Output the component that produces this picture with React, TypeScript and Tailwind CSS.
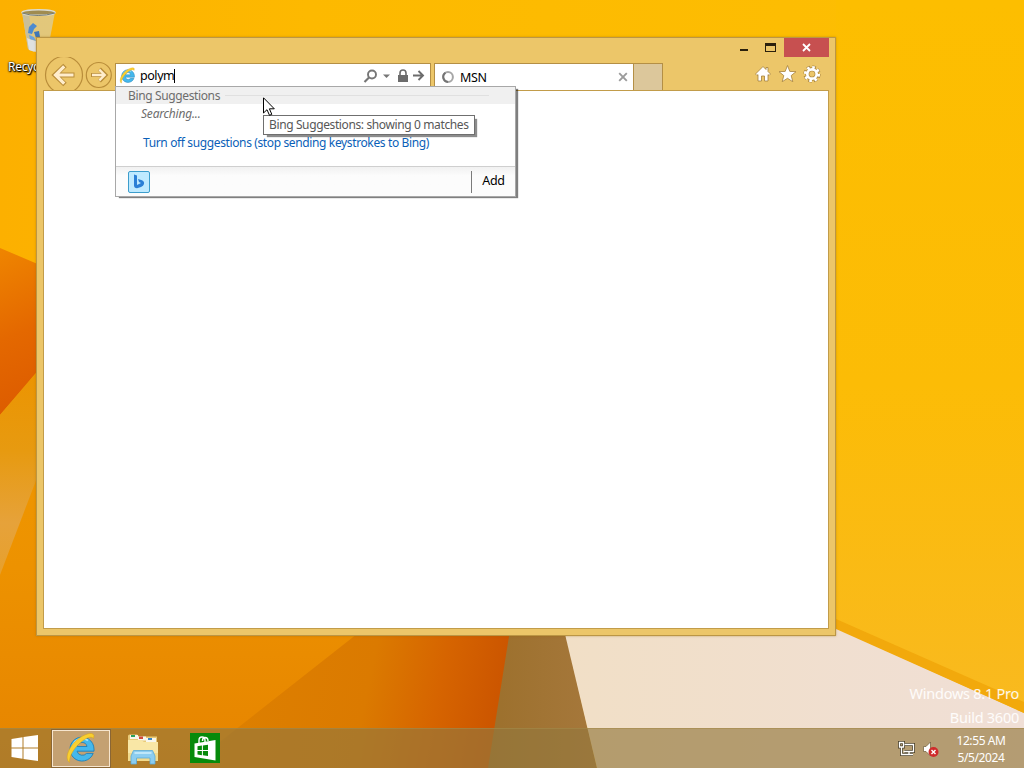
import React from 'react';

function Wallpaper() {
  return (
    <svg className="absolute inset-0" width="1024" height="768" viewBox="0 0 1024 768">
      <defs>
        <linearGradient id="sky" x1="0" y1="0" x2="1" y2="0">
          <stop offset="0" stopColor="#fcb000" />
          <stop offset="0.3" stopColor="#fdb900" />
          <stop offset="1" stopColor="#fdbf03" />
        </linearGradient>
        <linearGradient id="right" x1="0" y1="0" x2="0" y2="1">
          <stop offset="0" stopColor="#fdbe00" />
          <stop offset="0.5" stopColor="#fcbc06" />
          <stop offset="1" stopColor="#f8b924" />
        </linearGradient>
        <linearGradient id="ember" x1="0" y1="0" x2="0.1" y2="1">
          <stop offset="0" stopColor="#ef8500" />
          <stop offset="0.55" stopColor="#e46800" />
          <stop offset="1" stopColor="#dd5c00" />
        </linearGradient>
        <linearGradient id="band" x1="0" y1="0" x2="0" y2="1">
          <stop offset="0" stopColor="#ec9400" />
          <stop offset="0.4" stopColor="#e79a10" />
          <stop offset="0.75" stopColor="#e6a23a" />
          <stop offset="1" stopColor="#e7a02c" />
        </linearGradient>
        <linearGradient id="floor" x1="0" y1="0" x2="0" y2="1">
          <stop offset="0" stopColor="#f09900" />
          <stop offset="0.5" stopColor="#ed9200" />
          <stop offset="1" stopColor="#e68400" />
        </linearGradient>
        <linearGradient id="fold" x1="0" y1="0" x2="1" y2="0.1">
          <stop offset="0" stopColor="#de8200" />
          <stop offset="0.6" stopColor="#db7a00" />
          <stop offset="0.82" stopColor="#d66400" />
          <stop offset="1" stopColor="#cc5600" />
        </linearGradient>
        <linearGradient id="shade" x1="0" y1="0" x2="1" y2="0">
          <stop offset="0" stopColor="#9c702c" />
          <stop offset="1" stopColor="#a6783c" />
        </linearGradient>
        <linearGradient id="cream" x1="0" y1="0" x2="1" y2="0">
          <stop offset="0" stopColor="#f1dfc6" />
          <stop offset="1" stopColor="#f0dfd6" />
        </linearGradient>
      </defs>
      <rect width="1024" height="768" fill="url(#sky)" />
      <rect x="836" width="188" height="768" fill="url(#right)" />
      <path d="M0 415 L40 368 L520 600 V768 H0 Z" fill="url(#floor)" />
      <path d="M0 248 L40 265 V369 L0 415 Z" fill="url(#ember)" />
      <path d="M0 415 L40 368 V470 L0 575 Z" fill="url(#band)" />
      <path d="M390 608 L235 730 L187 768 H500 L512 608 Z" fill="url(#fold)" />
      <path d="M510 630 L565 630 L597 768 H488 Z" fill="url(#shade)" />
      <path d="M564 630 L836 628 L1024 713 V768 H597 Z" fill="url(#cream)" />
      <path d="M836 619 L1024 702 V713 L836 629 Z" fill="#f2a90c" />
    </svg>
  );
}

function IeLogo({ size }: { size: number }) {
  return (
    <svg width={size} height={size} viewBox="0 0 32 32" fill="none">
      <path
        d="M29 19.2 H12 A5.6 5.6 0 0 0 21.6 21.4 H28.200 A12 12 0 1 1 29 17 Z M12.200 14.500 H22 A5 5 0 0 0 12.200 14.500 Z"
        fill="#45b8ec"
        fillRule="evenodd"
        stroke="#1f80b8"
        strokeWidth="0.9"
      />
      <path d="M8 13 A10 10 0 0 1 23 8.500" stroke="#a4e4fb" strokeWidth="1.6" />
      <path
        d="M4.500 30.500 C-1.500 26 5 13.500 12.500 7.500 C19 2.200 27.500 -0.800 29 3.500 L28.500 6.500 C26 3.500 20.500 6 15 11 C8.500 17 4.500 23.500 4.500 30.500 Z"
        fill="#f9cf30"
        stroke="#d9a114"
        strokeWidth="0.5"
      />
    </svg>
  );
}

function RecycleBin() {
  return (
    <svg className="absolute left-[20px] top-[8px]" width="38" height="46" viewBox="0 0 38 46">
      <path d="M2 4 L8 41 Q18 46 28 41 L35 4 Z" fill="#dfca88" fillOpacity="0.9" />
      <path d="M2 4 L8 41 Q11 43 14 43.5 L9 6 Z" fill="#c9bf9a" />
      <path d="M7 30 L9 42 Q18 46 27 42 L29 30 Q18 36 7 30 Z" fill="#dfe1e0" />
      <ellipse cx="18.500" cy="4.500" rx="16.500" ry="2.800" fill="#a08c50" stroke="#dcdcd0" strokeWidth="1.500" />
      <path d="M2 5 Q18 10 35 5" stroke="#6a7068" strokeWidth="0.9" fill="none" />
      <path d="M9 19 L13 15 L17 18 L14 21 L12 26 L8 25 Z" fill="#4d8bd0" />
      <path d="M9 27 L14 29 L16 33 L10 31 Z" fill="#6ba3de" />
      <path d="M14 24 L19 23 L20 29 L16 30 Z" fill="#3f77b8" />
    </svg>
  );
}

function NavButtons() {
  return (
    <svg className="shrink-0" width="70" height="36" viewBox="0 0 70 36" fill="none">
      <g stroke="#b98d3a" strokeWidth="1.200">
        <circle cx="21" cy="20" r="18.500" />
        <circle cx="55.800" cy="20" r="12.500" />
      </g>
      <g>
        <path d="M31.500 20 H13 M22 10.500 L12 20 L22 29.500" stroke="#b98d3a" strokeWidth="5" />
        <path d="M30.500 20 H13 M21.200 11.300 L12.500 20 L21.200 28.700" stroke="#ffedcc" strokeWidth="3.200" />
        <path d="M48 20 H62 M56.500 14 L62.500 20 L56.500 26" stroke="#b98d3a" strokeWidth="4" />
        <path d="M49 20 H61 M56.300 14.600 L61.700 20 L56.300 25.400" stroke="#ffedcc" strokeWidth="2.400" />
      </g>
    </svg>
  );
}

function AddressBar() {
  return (
    <div className="w-[316px] h-[27px] bg-white border border-[#b48f45] flex items-center shrink-0 pl-[3px] pb-[2px]">
      <IeLogo size={17} />
      <span className="ml-[4px] pt-[2px] text-[12.5px] text-black leading-none tracking-[-0.45px]">polym</span>
      <span className="w-px h-[14px] bg-black" />
      <svg className="ml-auto mr-[4px]" width="64" height="16" viewBox="0 0 64 16" fill="none">
        <circle cx="10" cy="6.500" r="4" stroke="#767676" strokeWidth="1.900" />
        <path d="M7 9.500 L2.500 14" stroke="#767676" strokeWidth="2.200" />
        <path d="M21 6.500 H28 L24.500 10 Z" fill="#767676" />
        <rect x="36" y="7" width="10" height="7" fill="#6c6c6c" />
        <path d="M38 7.500 V5 A3 3 0 0 1 44 5 V7.500" stroke="#6c6c6c" strokeWidth="1.600" />
        <path d="M51 7.500 H60.500 M56.500 3 L61 7.500 L56.500 12" stroke="#6c6c6c" strokeWidth="1.900" />
      </svg>
    </div>
  );
}

function Tab() {
  return (
    <div className="ml-[3px] w-[200px] h-[27px] bg-white border border-b-0 border-[#b48f45] flex items-center pl-[6px] pr-[5px] shrink-0">
      <svg width="14" height="14" viewBox="0 0 14 14" fill="none">
        <circle cx="7" cy="7" r="4.900" stroke="#a6a6a6" strokeWidth="2" />
        <path d="M4.500 2.900 A4.900 4.900 0 0 0 7 11.900" stroke="#747474" strokeWidth="2" />
      </svg>
      <span className="ml-[5px] pt-[2px] text-[12.5px] text-black leading-none tracking-[-0.4px]">MSN</span>
      <svg className="ml-auto" width="10" height="10" viewBox="0 0 10 10">
        <path d="M1.200 1.200 L8.800 8.800 M8.800 1.200 L1.200 8.800" stroke="#9b9b9b" strokeWidth="1.900" />
      </svg>
    </div>
  );
}

function CommandIcons() {
  return (
    <svg className="ml-auto mr-[5px] -mt-[5px]" width="70" height="20" viewBox="0 0 70 20" fill="#ffffff" stroke="#a5803c" strokeWidth="0.8">
      <path d="M9 2.500 L1.500 10 L3 11.500 L4 10.600 V17 H7.500 V12 H10.500 V17 H14 V10.600 L15 11.500 L16.500 10 L14 7.500 V3.500 H12 V5.500 Z" />
      <path d="M33.500 1.500 L35.800 7.400 L42 7.700 L37.200 11.600 L38.800 17.700 L33.500 14.300 L28.200 17.700 L29.800 11.600 L25 7.700 L31.200 7.400 Z" />
      <g fill="none">
        <circle cx="58" cy="10" r="6.600" stroke="#a5803c" strokeWidth="4" strokeDasharray="3.300 1.884" />
        <circle cx="58" cy="10" r="4.700" stroke="#a5803c" strokeWidth="4" />
        <circle cx="58" cy="10" r="6.600" stroke="#ffffff" strokeWidth="3" strokeDasharray="2.600 2.584" />
        <circle cx="58" cy="10" r="4.700" stroke="#ffffff" strokeWidth="2.700" />
      </g>
    </svg>
  );
}

function SuggestionPopup() {
  return (
    <div className="absolute left-[78px] top-[48px] w-[401px] h-[111px] bg-white border border-[#a8a8a8] shadow-[3px_2px_1px_-1px_rgba(0,0,0,0.5)] flex flex-col text-[12px] tracking-[-0.37px]">
      <div className="h-[17px] bg-[#f0f0f0] flex items-center pl-[12px] pr-[26px] text-[#6d6d6d] shrink-0">
        <span className="leading-none whitespace-nowrap">Bing Suggestions</span>
        <span className="ml-[5px] flex-1 h-px bg-[#e0e0e0]" />
      </div>
      <div className="mt-[2px] pl-[25px] leading-[16px] italic text-[#6d6d6d] tracking-[-0.2px]">Searching...</div>
      <div className="mt-[13px] pl-[27px] leading-[16px] text-[#0b5fb8] whitespace-nowrap">
        Turn off suggestions (stop sending keystrokes to Bing)
      </div>
      <div className="mt-auto h-[30px] bg-gradient-to-b from-[#f1f1f1] to-[#fcfcfc] to-30% border-t border-[#cfcfcf] flex items-center pl-[12px]">
        <div className="w-[22px] h-[22px] bg-[#bfeaff] border border-[#3c9dcc] rounded-[2px] flex items-center justify-center">
          <svg width="12" height="15" viewBox="0 0 12 15">
            <path d="M1 0.500 L4 1.500 V11 L8 9 L6 8 L5 5 L9 6.300 Q11.500 7.400 11 10 Q10.500 12 8 13 L4 14.200 Q1 14 1 11.500 Z" fill="#2b7fd6" />
          </svg>
        </div>
        <div className="ml-auto w-[44px] h-[22px] border-l border-[#7b7b7b] flex items-center justify-center text-[12.5px] text-black">Add</div>
      </div>
    </div>
  );
}

function BrowserWindow() {
  return (
    <div className="absolute left-[36px] top-[37px] w-[800px] h-[599px] bg-[#ecc669] border border-[#bb9645] flex flex-col px-[6px] pb-[6px] shadow-[0_0_2px_rgba(150,100,0,0.5)]">
      <div className="h-[19px] flex justify-end shrink-0">
        <div className="w-[27px] flex items-center justify-center">
          <span className="w-[8px] h-[2px] bg-[#2b200c] mt-[5px]" />
        </div>
        <div className="w-[27px] flex items-center justify-center">
          <span className="w-[11px] h-[9px] border border-t-[3px] border-[#2b200c]" />
        </div>
        <div className="w-[45px] bg-[#c75050] flex items-center justify-center">
          <svg width="9" height="9" viewBox="0 0 9 9">
            <path d="M1 1 L8 8 M8 1 L1 8" stroke="#ffffff" strokeWidth="1.800" />
          </svg>
        </div>
      </div>
      <div className="h-[33px] flex items-end shrink-0 overflow-hidden">
        <div className="h-[35px] w-[72px] shrink-0">
          <NavButtons />
        </div>
        <AddressBar />
        <Tab />
        <div className="w-[29px] h-[27px] bg-[#dcc79b] border border-l-0 border-b-0 border-[#b48f45] shrink-0" />
        <div className="flex-1 h-[27px] flex items-center">
          <CommandIcons />
        </div>
      </div>
      <div className="flex-1 bg-white border border-[#c29c4a]" />
      <SuggestionPopup />
    </div>
  );
}

function Tooltip() {
  return (
    <div className="absolute left-[263px] top-[115px] w-[212px] h-[20px] bg-white border border-[#6f6f6f] shadow-[3px_3px_1px_-1px_rgba(0,0,0,0.45)] flex items-center pl-[5px] text-[12px] text-[#575757] tracking-[-0.38px] whitespace-nowrap">
      Bing Suggestions: showing 0 matches
    </div>
  );
}

function Cursor() {
  return (
    <svg className="absolute left-[263px] top-[97px]" width="13" height="20" viewBox="0 0 13 20">
      <path d="M0.500 0.800 V16 L4 12.700 L6.500 18.300 L8.800 17.300 L6.400 11.800 H11.300 Z" fill="#ffffff" stroke="#000000" />
    </svg>
  );
}

function StartIcon() {
  return (
    <svg width="28" height="26" viewBox="0 0 28 26" fill="#ffffff">
      <path d="M0.500 4 L11.500 2.300 V12.500 H0.500 Z M12.500 2.100 L27 0 V12.500 H12.500 Z M0.500 13.500 H11.500 V23.700 L0.500 22 Z M12.500 13.500 H27 V26 L12.500 23.900 Z" />
    </svg>
  );
}

function ExplorerIcon() {
  return (
    <svg width="34" height="32" viewBox="0 0 34 32">
      <path d="M2 3 Q2 1.500 3.500 1.500 H11 L13 3.500 H31 V28 H2 Z" fill="#e9cb78" />
      <rect x="4" y="2" width="8" height="4" fill="#f8f6ec" />
      <rect x="5" y="2" width="4" height="2" fill="#2aa05a" />
      <rect x="12" y="3.500" width="8" height="4" fill="#f8f6ec" />
      <rect x="13" y="3.500" width="4" height="2.500" fill="#d2493c" />
      <rect x="20" y="5" width="10" height="4" fill="#f8f6ec" />
      <rect x="22" y="5" width="4" height="2" fill="#3c86c2" />
      <path d="M2 7 H15 L18 9 H32 V28 H2 Z" fill="#f9e7a6" />
      <path d="M2 20 H32 V28 H2 Z" fill="#f2da8c" />
      <path d="M5 31 V23 L7.500 17.500 H26.500 L29 23 V31 H24 V25 H10.500 V31 Z" fill="#8ccdf0" stroke="#5aa9d6" strokeWidth="0.8" />
      <path d="M8.500 20 H25.500" stroke="#d0effc" strokeWidth="1.500" />
    </svg>
  );
}

function StoreIcon() {
  return (
    <svg width="30" height="30" viewBox="0 0 30 30">
      <rect width="30" height="30" fill="#078a0b" />
      <path d="M4.500 10.500 L25.500 7 V27.500 L4.500 24 Z" fill="#ffffff" />
      <path d="M9 11 V7.500 Q9 4 12 4 Q15 4 15 7.500 V9 M12.500 8 Q12.500 4.500 15 4.500 Q18 4.500 18 8" fill="none" stroke="#ffffff" strokeWidth="1.400" />
      <path d="M7.500 13.300 L11.900 12.600 V17 H7.500 Z M12.900 12.500 L18 11.700 V17 H12.900 Z M7.500 18 H11.900 V22.200 L7.500 21.500 Z M12.900 18 H18 V23.100 L12.900 22.300 Z" fill="#078a0b" />
    </svg>
  );
}

function TrayIcons() {
  return (
    <svg width="42" height="18" viewBox="0 0 42 18" fill="none">
      <g stroke="#4d432c" strokeWidth="3">
        <path d="M6.500 4.500 H15.500 V11.500 H6.500 M11 12 V14.500 M7 14.500 H15" />
        <path d="M1.500 2.500 H5.500 V7 H1.500 Z M3.500 7 V14.500 H7" />
      </g>
      <g stroke="#ffffff" strokeWidth="1.300">
        <path d="M6.500 4.500 H15.500 V11.500 H5.500 M11 12 V14.500 M7 14.500 H15" />
        <path d="M1.500 2.500 H5.500 V7 H1.500 Z M3.500 7 V14.500 H7" />
      </g>
      <path d="M25.500 6.500 H28 L32.500 2 V16 L28 11.500 H25.500 Z" fill="#ffffff" stroke="#6d5b3a" strokeWidth="0.7" />
      <circle cx="35.500" cy="12" r="5" fill="#cf2b2b" />
      <path d="M33.500 10 L37.500 14 M37.500 10 L33.500 14" stroke="#ffffff" strokeWidth="1.400" />
    </svg>
  );
}

function Taskbar() {
  return (
    <div className="relative h-[40px] bg-[rgba(148,120,62,0.65)] border-t border-[#a58a4a]/60 flex items-center">
      <div className="w-[51px] pl-[11px] pb-[2px] flex items-center shrink-0">
        <StartIcon />
      </div>
      <div className="w-[60px] h-[39px] bg-[#c4a172] border-2 border-[#f7e6cf] outline outline-1 -outline-offset-1 outline-[#8a6635] flex items-center justify-center shrink-0 pb-[2px]">
        <IeLogo size={32} />
      </div>
      <div className="ml-[15px]">
        <ExplorerIcon />
      </div>
      <div className="ml-[30px] pb-[2px]">
        <StoreIcon />
      </div>
      <div className="ml-auto flex items-center text-white">
        <TrayIcons />
        <div className="ml-[11px] mr-[13px] w-[60px] text-center text-[12px] leading-[17px] tracking-[-0.4px] whitespace-nowrap">
          <div>12:55 AM</div>
          <div>5/5/2024</div>
        </div>
      </div>
    </div>
  );
}

export default function App() {
  return (
    <div className="relative w-[1024px] h-[768px] overflow-hidden flex flex-col justify-end font-['Noto_Sans','Open_Sans',sans-serif] tracking-[-0.25px] select-none">
      <Wallpaper />
      <RecycleBin />
      <span className="absolute left-[8px] top-[58px] text-[12px] text-white whitespace-nowrap [text-shadow:0_1px_2px_#000,0_0_2px_#000,1px_1px_1px_#000]">
        Recycle Bin
      </span>
      <div className="relative self-end pr-[5px] -mb-[1px] text-right text-white/90 text-[14.5px] leading-[24px]">
        <div>Windows 8.1 Pro</div>
        <div>Build 3600</div>
      </div>
      <Taskbar />
      <BrowserWindow />
      <Tooltip />
      <Cursor />
    </div>
  );
}
